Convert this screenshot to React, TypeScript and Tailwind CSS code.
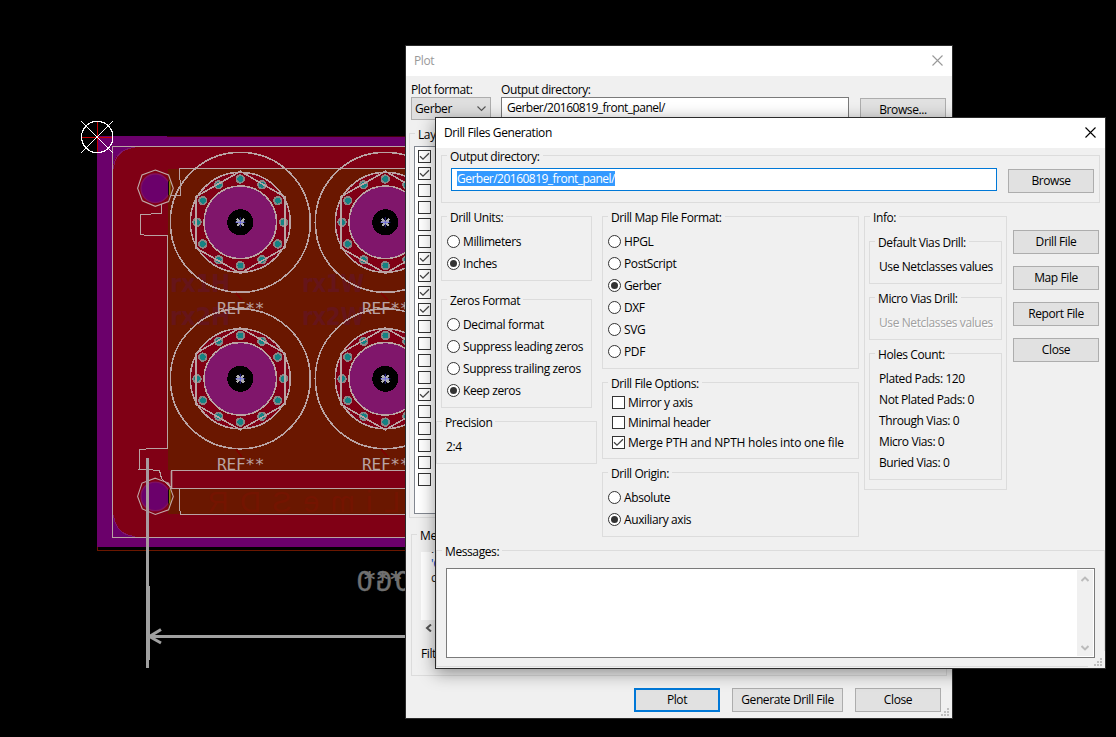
import type { ReactNode } from "react";

function Group({ title, className = "", legend = "ml-[5px]", children }: { title: string; className?: string; legend?: string; children?: ReactNode }) {
  return (
    <div className={`flex flex-col items-start border border-[#dcdcdc] ${className}`}>
      <span className={`-mt-2 h-4 shrink-0 whitespace-nowrap bg-[#f0f0f0] px-[3px] leading-[17px] ${legend}`}>{title}</span>
      {children}
    </div>
  );
}

function Button({ children, className = "w-[86px]", primary = false }: { children: ReactNode; className?: string; primary?: boolean }) {
  return (
    <button
      className={`flex h-6 shrink-0 items-center justify-center whitespace-nowrap bg-[#e1e1e1] ${primary ? "border-2 border-[#0078d7]" : "border border-[#adadad]"} ${className}`}
    >
      {children}
    </button>
  );
}

function Radio({ label, checked = false }: { label: string; checked?: boolean }) {
  return (
    <label className="flex h-[22px] items-start gap-[3px] leading-6 whitespace-nowrap">
      <span className="mt-[5px] flex size-[13px] items-center justify-center rounded-full border border-[#333] bg-white">
        {checked && <span className="size-[7px] rounded-full bg-[#333]" />}
      </span>
      {label}
    </label>
  );
}

function Box({ checked = false }: { checked?: boolean }) {
  return (
    <span className="flex size-[13px] shrink-0 items-center justify-center border border-[#333] bg-white">
      {checked && (
        <svg width="11" height="11" viewBox="0 0 11 11" fill="none" stroke="#444" strokeWidth="1.25">
          <path d="M1 5.2 4 8.2 10 2.2" />
        </svg>
      )}
    </span>
  );
}

function Check({ label, checked = false, className = "" }: { label: string; checked?: boolean; className?: string }) {
  return (
    <label className={`flex h-5 items-start gap-[3px] pt-1 leading-[14px] whitespace-nowrap ${className}`}>
      <Box checked={checked} />
      {label}
    </label>
  );
}

function CloseIcon({ color }: { color: string }) {
  return (
    <svg className="mb-px" width="11" height="11" viewBox="0 0 11 11" stroke={color} strokeWidth="1.1">
      <path d="M.5 .5 10.5 10.5M10.5 .5 .5 10.5" />
    </svg>
  );
}

function Grip() {
  return (
    <svg className="absolute right-[3px] bottom-[2px]" width="8" height="8" viewBox="0 0 8 8" fill="#bfbfbf">
      <path d="M6 0h2v2H6zM3 3h2v2H3zM6 3h2v2H6zM0 6h2v2H0zM3 6h2v2H3zM6 6h2v2H6z" />
    </svg>
  );
}

function Chevron({ up = false }: { up?: boolean }) {
  return (
    <svg width="8" height="6" viewBox="0 0 8 6" fill="none" stroke="#bcbcbc" strokeWidth="2">
      <path d={up ? "M.5 5 4 1.6 7.5 5" : "M.5 1 4 4.4 7.5 1"} />
    </svg>
  );
}

const padAngles = [0, 30, 60, 90, 120, 150, 180, 210, 240, 270, 300, 330];

function Connector({ x, y }: { x: number; y: number }) {
  return (
    <g transform={`translate(${x} ${y})`} fill="none" stroke="#b9a3a3" strokeWidth="1.6">
      <circle r="50" fill="#800015" />
      <circle r="36.3" fill="#80166b" />
      <circle r="70" />
      {padAngles.map((a) => (
        <g key={a} transform={`rotate(${a}) translate(43.3 0)`} stroke="none">
          <circle r="4.7" fill="#8a8585" />
          <circle r="2.9" fill="#158283" />
        </g>
      ))}
      <path d="M0-51 44.5-25.5V25.5L0 51-44.5 25.5V-25.5Z" />
      <circle r="13" fill="#000" stroke="none" />
      <path d="M-3.5-3.5 3.5 3.5M3.5-3.5-3.5 3.5M-4 0H4" stroke="#b0b0b0" strokeWidth="2.2" />
      <path d="M-5 0H5M0-5V5" stroke="#4848ff" strokeWidth=".6" shapeRendering="auto" />
    </g>
  );
}

function Hole({ y }: { y: number }) {
  return (
    <g transform={`translate(155.3 ${y})`}>
      <circle r="14.3" fill="#6b006b" stroke="#801060" strokeWidth="1.3" />
      <path d="M13.5-7V7" stroke="#000" strokeWidth="1.3" />
      <path d="M14.5-7V7" stroke="#8f9000" strokeWidth="1.3" />
      <path d="M0-18.2 13.3-13.3 18-0 13.3 13.3 0 18-13 12.5-17.7 0-13.3-13.3Z" fill="none" stroke="#c0aaaa" strokeWidth="1.1" />
    </g>
  );
}

function Board() {
  return (
    <svg className="absolute top-0 left-0" width="420" height="737" viewBox="0 0 420 737">
      <g shapeRendering="crispEdges">
        <path d="M97 136h70v1h253v410H97z" fill="#6b006b" />
        <path d="M167 136.5H420" stroke="#40000a" />
        <path d="M97.5 547v3.5H420" fill="none" stroke="#6a1700" />
        <path d="M420 147H135Q113 149 113 170V515Q116 535 135 537H420Z" fill="#800015" />
        <path d="M135 147.5Q115 149 113.5 169M113.5 515Q116 535 135 536.5" fill="none" stroke="#80166b" />
        <path d="M168 169H420V470H168zM168 489H420V514H168z" fill="#6a1700" />
      </g>
      <g fontFamily="DejaVu Sans, sans-serif" fontWeight="bold" fontSize="25" fill="#66151a">
        <text x="170" y="292" textLength="60" lengthAdjust="spacingAndGlyphs">rx1H</text>
        <text x="170" y="325" textLength="60" lengthAdjust="spacingAndGlyphs">rx2H</text>
        <text x="302" y="292" textLength="62" lengthAdjust="spacingAndGlyphs">rx1W</text>
        <text x="302" y="325" textLength="62" lengthAdjust="spacingAndGlyphs">rx2W</text>
      </g>
      <text transform="translate(400 512) scale(-1 1)" fontFamily="Liberation Sans, sans-serif" fontSize="29" textLength="192" fill="#741400">LimeSDR</text>
      <g fill="none" stroke="#b9a3a3" strokeWidth="1" shapeRendering="crispEdges">
        <path d="M420 146.5H112.5V537.5H420" />
        <path d="M420 168.5H179.5V178L180.5 182V195.5H171" />
        <path d="M161.5 204V213.5L140.5 214.5V234.5L148 235.5H167.5V448.5H152L139.5 449.5V469.5M138 469.5H153M153 470.5H159.5L161.5 478.5 170.5 487" />
        <path d="M420 470.5H171V488.5H420" />
        <path d="M171 488.5H179.5V508L180.5 514.5H420" />
      </g>
      <path d="M171.5 471V488" stroke="#b9a3a3" strokeWidth="1.6" />
      <Hole y={188.3} />
      <Hole y={496.4} />
      <g shapeRendering="crispEdges">
        <Connector x={240.3} y={222.3} />
        <Connector x={385.3} y={222.3} />
        <Connector x={240.3} y={378.8} />
        <Connector x={385.3} y={378.8} />
      </g>
      <g fontFamily="DejaVu Sans Mono, monospace" fontSize="16" fill="#b9a3a3">
        <text x="217" y="314" textLength="47">REF**</text>
        <text x="362" y="314" textLength="47">REF**</text>
        <text x="217" y="470" textLength="47">REF**</text>
        <text x="362" y="470" textLength="47">REF**</text>
      </g>
      <path d="M236 449 242 457M381 449 388 457M236 293 242 300M381 293 388 300" stroke="#800000" strokeWidth="1.5" />
      <g fontFamily="DejaVu Sans Mono, monospace" fill="#707070">
        <text transform="translate(411 590.5) scale(-1 1)" fontSize="27" textLength="54" stroke="#707070" strokeWidth=".3">OGO</text>
        <text x="363" y="586.5" fontSize="22" fontWeight="bold" textLength="39">***</text>
      </g>
      <g fill="none" stroke="#a0a0a0" strokeWidth="3" shapeRendering="crispEdges">
        <path d="M147.5 458V586" stroke="#a89a9f" />
        <path d="M147.5 547V668M148.5 586V660M150 636.5H420" />
      </g>
      <path d="M161 629.5 149.5 636.5 161 643" fill="none" stroke="#a0a0a0" strokeWidth="3" />
      <g fill="none" shapeRendering="crispEdges">
        <path d="M82 137.5H112M97.5 122V152" stroke="#c80000" />
        <circle cx="97.2" cy="137" r="15.7" stroke="#fff" strokeWidth="1.2" />
        <path d="M81 121 113 153M113 121 81 153" stroke="#fff" />
      </g>
    </svg>
  );
}

const layers = [true, true, false, false, false, false, true, true, true, true, false, false, false, false, true, false, false, false, false, false];

function PlotWindow() {
  return (
    <section className="absolute top-[45px] left-[405px] flex h-[674px] w-[548px] flex-col overflow-hidden border border-[#2b2b2b] bg-[#f0f0f0]">
      <header className="flex h-[30px] shrink-0 items-center justify-between bg-white pr-[9px] pl-2 text-[#999]">
        Plot
        <CloseIcon color="#999" />
      </header>
      <div className="flex h-[57px] shrink-0 pt-[5px] pl-[5px]">
        <div className="flex w-[90px] flex-col">
          <span className="h-4 leading-[17px]">Plot format:</span>
          <div className="flex h-[23px] w-20 items-center justify-between border border-[#adadad] bg-[#dfdfdf] pr-1 pl-[3px]">
            Gerber
            <svg width="9" height="6" viewBox="0 0 9 6" fill="none" stroke="#555" strokeWidth="1.1">
              <path d="M.5 .5 4.5 4.5 8.5 .5" />
            </svg>
          </div>
        </div>
        <div className="flex w-[359px] flex-col">
          <span className="h-4 leading-[17px]">Output directory:</span>
          <div className="flex h-[23px] w-[348px] items-center border border-[#7a7a7a] bg-white pb-[2px] pl-[5px] tracking-[-0.52px]">Gerber/20160819_front_panel/</div>
        </div>
        <div className="pt-[17px]">
          <Button>Browse...</Button>
        </div>
      </div>
      <Group title="Layers:" className="mr-2 ml-[3px] h-[385px] shrink-0">
        <div className="mt-1 ml-1 flex h-[368px] w-[300px] flex-col gap-1 border border-[#828790] bg-white pt-[3px] pl-[3px]">
          {layers.map((on, i) => (
            <Box key={i} checked={on} />
          ))}
        </div>
      </Group>
      <Group title="Messages:" className="mt-4 mr-[5px] ml-[5px] h-[142px] shrink-0">
        <div className="mt-[9px] ml-[9px] flex h-[68px] w-[400px] flex-col overflow-hidden bg-white pl-[10px] leading-[15px] text-[#222]">
          <span className="-mt-[11px]">.</span>
          <span className="text-[#0050d0]">'Gerber</span>
          <span className="-mt-px">created</span>
        </div>
        <svg className="mt-1 ml-[13px]" width="7" height="8" viewBox="0 0 7 8" fill="none" stroke="#555" strokeWidth="2">
          <path d="M6 .5 2 4 6 7.5" />
        </svg>
        <span className="mt-[14px] ml-[9px] leading-4">Filter:</span>
      </Group>
      <footer className="flex pt-3 pl-[228px]">
        <Button primary>Plot</Button>
        <Button className="ml-3 w-[111px]">Generate Drill File</Button>
        <Button className="ml-3 w-[86px]">Close</Button>
      </footer>
      <Grip />
    </section>
  );
}

function DrillWindow() {
  return (
    <section className="absolute top-[117px] left-[435px] flex h-[552px] w-[671px] flex-col border border-[#2b2b2b] bg-[#f0f0f0] shadow-[0_4px_16px_rgba(0,0,0,0.42)]">
      <header className="flex h-[30px] shrink-0 items-center justify-between bg-white pr-[9px] pl-2">
        Drill Files Generation
        <CloseIcon color="#000" />
      </header>
      <Group title="Output directory:" className="mx-[5px] mt-[7px] h-12 shrink-0">
        <div className="mt-1 ml-[9px] flex gap-[11px]">
          <div className="flex h-[23px] w-[546px] items-start border border-[#0078d7] bg-white pt-[2px] pl-[5px]">
            <span className="h-[15px] bg-[#3399ff] leading-[15px] tracking-[-0.52px] text-white">Gerber/20160819_front_panel/</span>
          </div>
          <div className="pt-px">
            <Button>Browse</Button>
          </div>
        </div>
      </Group>
      <div className="mt-[13px] flex h-[334px] shrink-0 items-start">
        <div className="flex w-[166px] flex-col">
          <Group title="Drill Units:" className="ml-[5px] h-[65px] w-[151px]">
            <div className="mt-[5px] ml-[5px]">
              <Radio label="Millimeters" />
              <Radio label="Inches" checked />
            </div>
          </Group>
          <Group title="Zeros Format" className="mt-[18px] ml-[5px] h-[109px] w-[151px]">
            <div className="mt-[5px] ml-[5px]">
              <Radio label="Decimal format" />
              <Radio label="Suppress leading zeros" />
              <Radio label="Suppress trailing zeros" />
              <Radio label="Keep zeros" checked />
            </div>
          </Group>
          <Group title="Precision" className="mt-[13px] h-[43px] w-[161px]">
            <span className="mt-[9px] ml-[9px] leading-4">2:4</span>
          </Group>
        </div>
        <div className="flex w-[257px] flex-col">
          <Group title="Drill Map File Format:" className="h-[153px]">
            <div className="mt-[5px] ml-[5px]">
              <Radio label="HPGL" />
              <Radio label="PostScript" />
              <Radio label="Gerber" checked />
              <Radio label="DXF" />
              <Radio label="SVG" />
              <Radio label="PDF" />
            </div>
          </Group>
          <Group title="Drill File Options:" className="mt-[13px] h-[77px]">
            <div className="mt-px ml-[9px]">
              <Check label="Mirror y axis" />
              <Check label="Minimal header" />
              <Check label="Merge PTH and NPTH holes into one file" className="tracking-[-0.2px]" checked />
            </div>
          </Group>
          <Group title="Drill Origin:" className="mt-[13px] h-[65px]">
            <div className="mt-[5px] ml-[5px]">
              <Radio label="Absolute" />
              <Radio label="Auxiliary axis" checked />
            </div>
          </Group>
        </div>
        <Group title="Info:" className="ml-[5px] h-[274px] w-[143px]">
          <Group title="Default Vias Drill:" className="mt-4 ml-1 h-[43px] w-[133px]">
            <span className="mt-[9px] ml-[9px] leading-4 whitespace-nowrap">Use Netclasses values</span>
          </Group>
          <Group title="Micro Vias Drill:" className="mt-[13px] ml-1 h-[43px] w-[133px]">
            <span className="mt-[9px] ml-[9px] leading-4 whitespace-nowrap text-[#a0a0a0] [text-shadow:1px_1px_0_#fff]">Use Netclasses values</span>
          </Group>
          <Group title="Holes Count:" className="mt-[13px] ml-1 h-[127px] w-[133px]">
            <div className="mt-[6px] ml-[9px] flex flex-col leading-[21px] whitespace-nowrap">
              <span>Plated Pads: 120</span>
              <span>Not Plated Pads: 0</span>
              <span>Through Vias: 0</span>
              <span>Micro Vias: 0</span>
              <span>Buried Vias: 0</span>
            </div>
          </Group>
        </Group>
        <div className="ml-[6px] flex flex-col gap-3 pt-[14px]">
          <Button>Drill File</Button>
          <Button>Map File</Button>
          <Button>Report File</Button>
          <Button>Close</Button>
        </div>
      </div>
      <Group title="Messages:" className="h-[117px] shrink-0" legend="ml-[5px]">
        <div className="mt-[9px] ml-[9px] flex h-[90px] w-[649px] justify-end border border-[#7a7a7a] bg-white p-px">
          <div className="flex w-4 flex-col items-center justify-between bg-[#f0f0f0] pt-[6px] pb-[5px]">
            <Chevron up />
            <Chevron />
          </div>
        </div>
      </Group>
      <div className="absolute right-0 bottom-0 h-[17px] w-[17px] bg-[#f0f0f0] [clip-path:polygon(65%_0,100%_0,100%_100%,0_100%,0_70%,65%_70%)]" />
      <Grip />
    </section>
  );
}

export default function App() {
  return (
    <main className="relative h-[737px] w-[1116px] overflow-hidden bg-black font-['Open_Sans','Noto_Sans',sans-serif] text-[12px] tracking-[-0.4px] text-black">
      <Board />
      <PlotWindow />
      <DrillWindow />
    </main>
  );
}
